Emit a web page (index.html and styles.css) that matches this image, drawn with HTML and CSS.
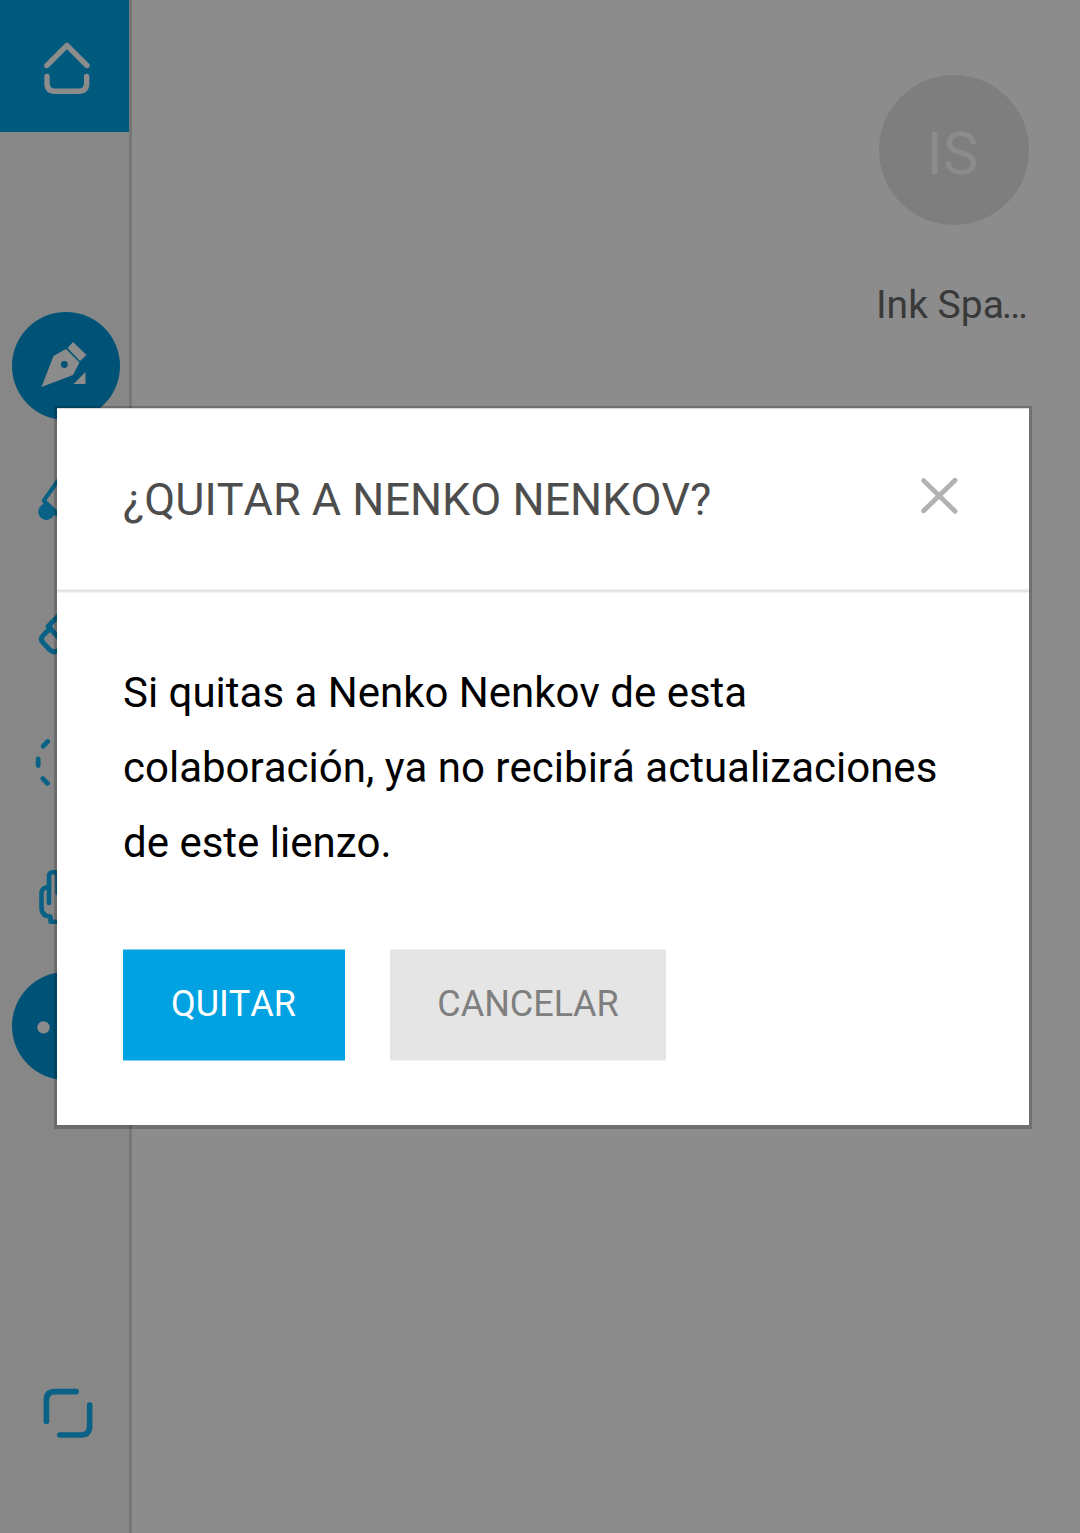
FILE: index.html
```html
<!DOCTYPE html>
<html lang="es">
<head>
<meta charset="utf-8">
<title>Lienzo</title>
<link rel="stylesheet" href="styles.css">
</head>
<body>
<div class="app">
  <nav class="sidebar">
    <div class="home">
      <svg class="icon" viewBox="0 0 132 132" stroke-width="5.400"><path d="M46.800 65.500 66.900 45.400 87 65.500M47 76.500V83Q47 91.300 55 91.300H78.500Q86.700 91.300 86.700 83V76.500"/></svg>
    </div>
    <div class="tool round">
      <svg viewBox="12 312 108 108"><path class="fill" d="M73 342 86.500 355 80 361 67.500 348ZM66 349 79.500 362.500 73 375 41.500 387 53.500 356ZM85.500 372V384H73.500Z"/><circle class="hole" cx="64.300" cy="364.500" r="3.400"/></svg>
    </div>
    <div class="tool">
      <svg class="icon" viewBox="0 420 132 138" stroke-width="4"><path d="M62 475 43.800 500.500 62 518"/><path class="solid" d="M44 500 58 513V517L54 515A8.200 8.200 0 1 1 43 504.300Z"/></svg>
    </div>
    <div class="tool">
      <svg class="icon" viewBox="0 558 132 138" stroke-width="5"><path d="M64 610 48 626.500 62 641M50.500 628 43.500 635Q39.500 638.800 43 642.500L49.500 649.500Q54 654 58.500 650L66 642"/></svg>
    </div>
    <div class="tool">
      <svg class="icon" viewBox="0 696 132 138" stroke-width="4.800"><path d="M43.300 746.200 47.600 741.600M38.200 759V765.500M42.800 778.600 47.500 783.400"/></svg>
    </div>
    <div class="tool">
      <svg class="icon" viewBox="0 834 132 138" stroke-width="4.600"><path d="M49 903V876.500Q49 872 53.200 872Q57.500 872 57.500 876V893M48 887Q41.500 888 41.500 893V907Q41.500 916.500 50.500 916.500V921.800H64"/></svg>
    </div>
    <div class="tool round">
      <svg viewBox="12 972 108 108"><circle class="fill" cx="43.500" cy="1027.400" r="6.200"/><circle class="fill" cx="66" cy="1027.400" r="6.200"/><circle class="fill" cx="88.500" cy="1027.400" r="6.200"/></svg>
    </div>
    <div class="fit">
      <svg class="icon" viewBox="0 1347 132 132" stroke-width="5.600"><path d="M46.400 1421.500V1400Q46.400 1391.600 55 1391.600H76.200M89.700 1405V1426Q89.700 1435 81 1435H59.800"/></svg>
    </div>
  </nav>
  <main class="canvas">
    <div class="user">
      <div class="avatar">IS</div>
      <div class="name">Ink Spa<span class="dots">…</span></div>
    </div>
  </main>
</div>
<section class="dialog" role="dialog">
  <header class="dialog-head">
    <h1 class="title">¿QUITAR A NENKO NENKOV?</h1>
    <svg class="close" viewBox="0 0 38 38"><path d="M3.700 3.600 35 34.300M35 3.200 3.700 33.800"/></svg>
  </header>
  <div class="dialog-body">
    <p class="message">Si quitas a Nenko Nenkov de esta colaboración, ya no recibirá actualizaciones de este lienzo.</p>
    <div class="actions">
      <button class="btn primary">QUITAR</button>
      <button class="btn secondary">CANCELAR</button>
    </div>
  </div>
</section>
</body>
</html>
```
FILE: styles.css
```css
* { box-sizing: border-box; }
body {
  margin: 0;
  font-family: Roboto, sans-serif;
  background: #8c8c8c;
}
.app {
  display: flex;
  height: 1533px;
}
.sidebar {
  display: flex;
  flex-direction: column;
  width: 132px;
  background: #878787;
  border-right: 3px solid #767676;
}
.sidebar svg { display: block; flex: none; }
.home {
  height: 132px;
  margin-bottom: 180px;
  background: #005a7d;
}
.home .icon { width: 132px; height: 132px; stroke: #8c8c8c; }
.icon {
  width: 132px;
  fill: none;
  stroke: #096285;
  stroke-linecap: round;
  stroke-linejoin: round;
}
.solid { fill: #096285; stroke: none; }
.tool { height: 138px; }
.tool .icon { height: 138px; }
.round {
  width: 108px;
  height: 108px;
  margin-left: 12px;
  border-radius: 50%;
  background: #005377;
}
.round svg { width: 108px; height: 108px; }
.fill { fill: #8c8c8c; }
.hole { fill: #005377; }
.fit { margin-top: auto; height: 186px; }
.fit .icon { height: 132px; }
.canvas {
  flex: 1;
  display: flex;
  justify-content: flex-end;
  padding: 75px 51px 0 0;
}
.user { width: 153px; }
.avatar {
  width: 150px;
  height: 150px;
  margin-left: 3px;
  padding-right: 3px;
  border-radius: 50%;
  background: #7e7e7e;
  color: #8c8c8c;
  font-size: 60px;
  line-height: 158px;
  text-align: center;
}
.name {
  margin-top: 57px;
  font-size: 39px;
  line-height: 46px;
  color: #393939;
  white-space: nowrap;
}
.dots { margin-left: -2px; }
.dialog {
  position: absolute;
  left: 57px;
  top: 408px;
  width: 972px;
  height: 717px;
  background: #fff;
  font-kerning: none;
  box-shadow: 0 1px 0 3px rgba(0, 0, 0, .2);
}
.dialog-head {
  display: flex;
  justify-content: space-between;
  align-items: flex-start;
  height: 184px;
  padding: 65px 71px 0 66px;
  border-top: 1px solid #d8d8d8;
  border-bottom: 2px solid #e4e4e4;
  box-shadow: 0 1px #f2f2f2, inset 0 -1px #f2f2f2;
}
.title {
  margin: 0;
  font-size: 45px;
  font-weight: 400;
  line-height: 52px;
  color: #4d4d4d;
}
.close {
  width: 38px;
  height: 38px;
  margin-top: 3px;
  fill: none;
  stroke: #b2b2b2;
  stroke-width: 4.800;
  stroke-linecap: round;
}
.dialog-body { padding: 63px 66px 0; }
.message {
  margin: 0;
  font-size: 42px;
  line-height: 75px;
  color: #000;
}
.actions {
  display: flex;
  gap: 45px;
  margin-top: 70px;
}
.btn {
  height: 110px;
  padding: 0 0 2px;
  border: 0;
  font: 36px/106px Roboto, sans-serif;
  font-kerning: none;
}
.primary {
  width: 222px;
  padding-right: 1px;
  background: #00a2e2;
  color: #fff;
  box-shadow: 0 1px #80d0f0, 0 -1px #80d0f0;
}
.secondary {
  width: 276px;
  background: #e5e5e5;
  color: #7f7f7f;
  box-shadow: 0 1px #f2f2f2, 0 -1px #f2f2f2;
}
```
